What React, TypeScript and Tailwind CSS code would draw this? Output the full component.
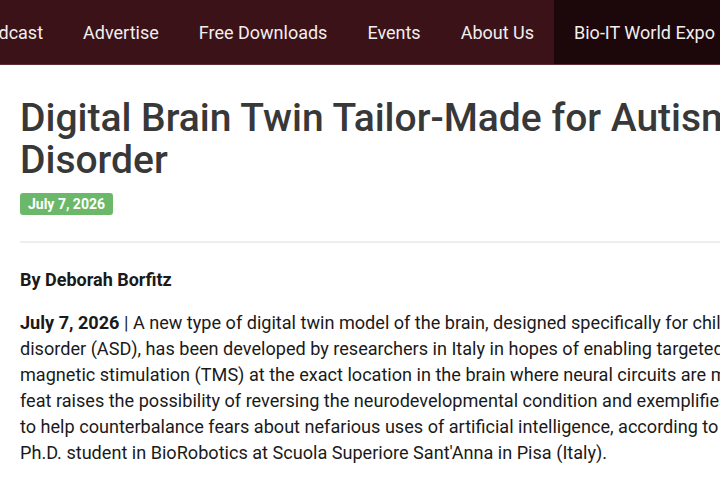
import React from "react";

const navItems = ["Podcast", "Advertise", "Free Downloads", "Events", "About Us"];

const lines = [
  "A new type of digital twin model of the brain, designed specifically for children with autism spectrum",
  "disorder (ASD), has been developed by researchers in Italy in hopes of enabling targeted transcranial",
  "magnetic stimulation (TMS) at the exact location in the brain where neural circuits are malfunctioning. The",
  "feat raises the possibility of reversing the neurodevelopmental condition and exemplifies the potential of AI",
  "to help counterbalance fears about nefarious uses of artificial intelligence, according to lead author and",
  "Ph.D. student in BioRobotics at Scuola Superiore Sant'Anna in Pisa (Italy).",
];

export default function App() {
  return (
    <div
      className="w-[720px] h-[480px] overflow-hidden bg-white"
      style={{ fontFamily: "Roboto, 'Noto Sans', sans-serif" }}
    >
      <nav className="h-[65px] bg-[#3a1218] border-b border-[#5c2f35] flex items-stretch whitespace-nowrap">
        <div className="flex items-stretch -ml-[43px]">
          {navItems.map((item) => (
            <a key={item} className="px-5 flex items-center text-[18px] text-[#f3eeee]">
              {item}
            </a>
          ))}
          <a className="px-5 flex items-center text-[18px] text-[#f3eeee] bg-[#1c070a]">
            Bio-IT World Expo
          </a>
        </div>
      </nav>

      <main className="pl-5 whitespace-nowrap">
        <h1 className="mt-[32px] text-[39px] leading-[42px] font-medium text-[#383838]">
          Digital Brain Twin Tailor-Made for Autism Spectrum
          <br />
          Disorder
        </h1>
        <div className="mt-[12px] inline-flex h-[22px] items-center rounded-[3px] bg-[#6cb86a] px-2 text-[14px] font-bold text-white">
          July 7, 2026
        </div>
        <div className="mt-[25px] h-[2px] bg-[#eeeeee]" />
        <p className="mt-[23px] text-[18px] font-bold text-[#1a1a1a]">By Deborah Borfitz</p>
        <div className="mt-[17px] text-[18.1px] leading-[26px] text-[#1a1a1a]">
          {lines.map((line, i) => (
            <div key={i}>
              {i === 0 && <strong className="font-bold">July 7, 2026</strong>}
              {i === 0 && " | "}
              {line}
            </div>
          ))}
        </div>
      </main>
    </div>
  );
}
